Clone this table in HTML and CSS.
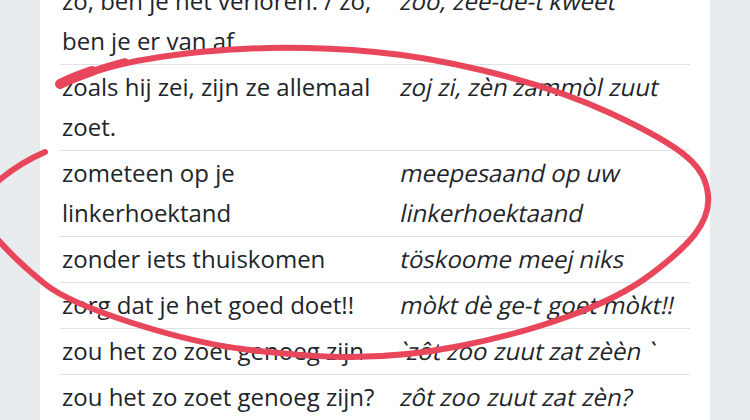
FILE: index.html
```html
<!DOCTYPE html>
<html lang="nl">
<head>
<meta charset="utf-8">
<title>Woordenlijst</title>
<link rel="stylesheet" href="styles.css">
</head>
<body>
<main class="page">
  <table class="words">
    <colgroup><col class="c1"><col class="c2"></colgroup>
    <tbody>
      <tr><td>zo, ben je het verloren. / zo, ben je er van af</td><td class="dial"><span>zoo,</span> <span>zee-de-t</span> <span>kweet</span></td></tr>
      <tr><td>zoals hij zei, zijn ze allemaal zoet.</td><td class="dial"><span>zoj</span> <span>zi,</span> <span>zèn</span> <span>zammòl</span> <span>zuut</span></td></tr>
      <tr><td>zometeen op je linkerhoektand</td><td class="dial"><span>meepesaand</span> <span>op</span> <span>uw</span> <span>linkerhoektaand</span></td></tr>
      <tr><td>zonder iets thuiskomen</td><td class="dial"><span>töskoome</span> <span>meej</span> <span>niks</span></td></tr>
      <tr><td>zorg dat je het goed doet!!</td><td class="dial"><span>mòkt</span> <span>dè</span> <span>ge-t</span> <span>goet</span> <span>mòkt!!</span></td></tr>
      <tr><td>zou het zo zoet genoeg zijn</td><td class="dial"><span>`zôt</span> <span>zôo</span> <span>zuut</span> <span>zat</span> <span>zèèn</span> <span>`</span></td></tr>
      <tr><td>zou het zo zoet genoeg zijn?</td><td class="dial"><span>zôt</span> <span>zoo</span> <span>zuut</span> <span>zat</span> <span>zèn?</span></td></tr>
    </tbody>
  </table>
</main>
<svg class="scribble" width="750" height="420" viewBox="0 0 750 420" aria-hidden="true">
  <path class="ink" d="M60,84 C95,68 140,58 200,52 S320,47 375,52 S530,76 610,113 S705,168 708,195 S690,245 650,275 S540,330 460,346 S320,358 250,350 S75,308 45,284 S-20,225 -20,208 S15,165 45,152"/>
  <path class="ink thick" d="M60,84 C70,79 80,75 92,71"/>
  <path class="ink mid" d="M60,84 C80,76 100,68 125,62"/>
</svg>
</body>
</html>
```
FILE: styles.css
```css
html, body {
  margin: 0;
  padding: 0;
}
body {
  background: #e9ecef;
  font-family: "Open Sans", "Liberation Sans", sans-serif;
  color: #212529;
  width: 750px;
  height: 420px;
  overflow: hidden;
  position: relative;
}
.page {
  margin: -21px 0 0 40px;
  width: 630px;
  padding: 0 20px;
  background: #ffffff;
  min-height: 460px;
}
.words {
  width: 630px;
  border-collapse: collapse;
  table-layout: fixed;
  font-size: 24px;
  line-height: 40px;
}
.c1 { width: 339px; }
.c2 { width: 291px; }
.words td {
  padding: 2px 0 3px 2px;
  vertical-align: top;
  border-top: 1px solid #dee2e6;
}
.words tr:first-child td {
  border-top: none;
}
.words td.dial span {
  display: inline-block;
  transform: skewX(-12deg);
}
.scribble {
  position: absolute;
  left: 0;
  top: 0;
  pointer-events: none;
}
.ink {
  fill: none;
  stroke: #e8475b;
  stroke-width: 6;
  stroke-linecap: round;
  stroke-linejoin: round;
}
.ink.thick { stroke-width: 10; }
.ink.mid { stroke-width: 7.5; }
```
